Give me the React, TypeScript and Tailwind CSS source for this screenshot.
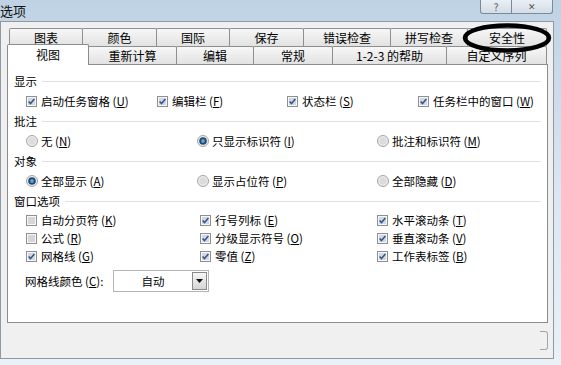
import React from "react";

type OptProps = {
  kind: "check" | "radio";
  on: boolean;
  label: string;
  k: string;
  w: string;
};

const CheckBox = ({ on }: { on: boolean }) => (
  <svg width="11" height="11" viewBox="0 0 11 11" className="shrink-0">
    <rect x="0.5" y="0.5" width="10" height="10" fill="#f7f7f7" stroke="#8e8f8f" />
    <rect x="2" y="2" width="7" height="7" fill={on ? "#cfd9e6" : "#d6d6d6"} />
    {on && (
      <path d="M2.6 5.4 L4.5 7.6 L8.4 2.9" stroke="#3a5287" strokeWidth="1.5" fill="none" />
    )}
  </svg>
);

const RadioDot = ({ on }: { on: boolean }) => (
  <svg width="12" height="12" viewBox="0 0 12 12" className="shrink-0">
    <circle cx="6" cy="6" r="5.5" fill="#eeeeee" stroke="#a2a2a2" />
    <circle cx="6" cy="6" r="3.8" fill={on ? "#1e4a74" : "#dcdcdc"} />
    {on && <circle cx="6" cy="6" r="1.9" fill="#62a0d8" />}
  </svg>
);

const Opt = ({ kind, on, label, k, w }: OptProps) => (
  <div className={`${w} flex items-center`}>
    {kind === "check" ? <CheckBox on={on} /> : <RadioDot on={on} />}
    <span className={kind === "check" ? "ml-[4px] whitespace-nowrap" : "ml-[3px] whitespace-nowrap"}>
      {label} (<u>{k}</u>)
    </span>
  </div>
);

const Section = ({ title }: { title: string }) => (
  <div className="flex h-[20px] items-center px-[6px]">
    <span className="whitespace-nowrap">{title}</span>
    <div className="ml-[5px] h-px flex-1 bg-[#dde2e7]" />
  </div>
);

const Tab = ({ label, w }: { label: string; w: string }) => (
  <div
    className={`${w} -mr-px flex h-[18px] items-center justify-center rounded-t-[2px] border border-b-0 border-[#8f8f8f] bg-linear-to-b from-[#f7f7f7] to-[#e2e2e2] text-[12px] leading-none whitespace-nowrap`}
  >
    {label}
  </div>
);

const App = () => {
  return (
    <div className="relative h-[365px] w-[561px] overflow-hidden bg-linear-to-b from-[#bfd2e4] via-[#d9e6f1] to-[#eaf1f7] font-['Noto_Sans_CJK_SC',sans-serif] text-black">
      {/* title bar */}
      <div className="flex h-[21px] items-start">
        <div className="pt-[2px] text-[13px] leading-[17px] text-[#111]">选项</div>
        <div className="ml-auto mr-[8px] flex h-[14px]">
          <div className="flex h-[14px] w-[32px] items-center justify-center rounded-bl-[3px] border border-t-0 border-[#7d8996] bg-linear-to-b from-[#e9eff5] to-[#d3dde7] text-[10px] leading-[12px] text-[#555]">
            ?
          </div>
          <div className="flex h-[14px] w-[41px] items-center justify-center rounded-br-[3px] border border-t-0 border-l-0 border-[#7d8996] bg-linear-to-b from-[#e9eff5] to-[#d3dde7] text-[9px] leading-[12px] text-[#555]">
            ✕
          </div>
        </div>
      </div>

      {/* dialog body */}
      <div className="h-[338px] w-[554px] border border-[#8e99a4] bg-[#f0f0f0]">
        <div className="mt-[6px]">
          <div className="flex pl-[8px]">
            <Tab label="图表" w="w-[74px]" />
            <Tab label="颜色" w="w-[75px]" />
            <Tab label="国际" w="w-[74px]" />
            <Tab label="保存" w="w-[75px]" />
            <Tab label="错误检查" w="w-[88px]" />
            <Tab label="拼写检查" w="w-[78px]" />
            <Tab label="安全性" w="w-[80px]" />
          </div>
          <div className="flex h-[18px] items-end pl-[6px]">
            <div className="relative z-10 -mb-px -mr-px flex h-[21px] w-[82px] items-center justify-center rounded-t-[2px] border border-b-0 border-[#8c8c8c] bg-white text-[12px] leading-none">
              视图
            </div>
            <Tab label="重新计算" w="w-[89px]" />
            <Tab label="编辑" w="w-[78px]" />
            <Tab label="常规" w="w-[80px]" />
            <Tab label="1-2-3 的帮助" w="w-[115px]" />
            <Tab label="自定义序列" w="w-[101px]" />
          </div>
        </div>

        {/* panel */}
        <div className="ml-[6px] h-[259px] w-[541px] border border-[#8c8c8c] bg-white pt-[6px] text-[11.5px] leading-[14px]">
          <Section title="显示" />
          <div className="flex h-[20px] items-center pl-[18px]">
            <Opt kind="check" on label="启动任务窗格" k="U" w="w-[131px]" />
            <Opt kind="check" on label="编辑栏" k="F" w="w-[130px]" />
            <Opt kind="check" on label="状态栏" k="S" w="w-[131px]" />
            <Opt kind="check" on label="任务栏中的窗口" k="W" w="w-[120px]" />
          </div>
          <Section title="批注" />
          <div className="flex h-[20px] items-center pl-[18px]">
            <Opt kind="radio" on={false} label="无" k="N" w="w-[171px]" />
            <Opt kind="radio" on label="只显示标识符" k="I" w="w-[180px]" />
            <Opt kind="radio" on={false} label="批注和标识符" k="M" w="w-[140px]" />
          </div>
          <Section title="对象" />
          <div className="flex h-[20px] items-center pl-[18px]">
            <Opt kind="radio" on label="全部显示" k="A" w="w-[171px]" />
            <Opt kind="radio" on={false} label="显示占位符" k="P" w="w-[180px]" />
            <Opt kind="radio" on={false} label="全部隐藏" k="D" w="w-[140px]" />
          </div>
          <Section title="窗口选项" />
          <div className="flex h-[18px] items-center pl-[18px]">
            <Opt kind="check" on={false} label="自动分页符" k="K" w="w-[174px]" />
            <Opt kind="check" on label="行号列标" k="E" w="w-[177px]" />
            <Opt kind="check" on label="水平滚动条" k="T" w="w-[140px]" />
          </div>
          <div className="flex h-[18px] items-center pl-[18px]">
            <Opt kind="check" on={false} label="公式" k="R" w="w-[174px]" />
            <Opt kind="check" on label="分级显示符号" k="O" w="w-[177px]" />
            <Opt kind="check" on label="垂直滚动条" k="V" w="w-[140px]" />
          </div>
          <div className="flex h-[18px] items-center pl-[18px]">
            <Opt kind="check" on label="网格线" k="G" w="w-[174px]" />
            <Opt kind="check" on label="零值" k="Z" w="w-[177px]" />
            <Opt kind="check" on label="工作表标签" k="B" w="w-[140px]" />
          </div>
          <div className="mt-[5px] flex items-center pl-[17px]">
            <span className="w-[88px] whitespace-nowrap">
              网格线颜色 (<u>C</u>):
            </span>
            <div className="flex h-[22px] w-[96px] items-center border border-[#b3b3b3] bg-white">
              <span className="flex-1 text-center">自动</span>
              <div className="mr-[1px] flex h-[18px] w-[15px] items-center justify-center border border-[#8a8a8a] bg-linear-to-b from-[#f6f6f6] to-[#d6d6d6]">
                <svg width="7" height="4" viewBox="0 0 7 4">
                  <path d="M0 0 H7 L3.5 4 Z" fill="#111" />
                </svg>
              </div>
            </div>
          </div>
        </div>

        {/* bottom button strip */}
        <div className="flex justify-end pr-[5px] pt-[8px]">
          <div className="h-[19px] w-[8px] rounded-r-[3px] border border-l-0 border-[#a5a5a5]" />
        </div>
      </div>

      {/* hand-drawn annotation */}
      <svg
        className="absolute left-[460px] top-[19px]"
        width="100"
        height="38"
        viewBox="0 0 100 38"
      >
        <ellipse cx="47" cy="19" rx="42" ry="12.5" fill="none" stroke="#000" strokeWidth="4.5" />
      </svg>
    </div>
  );
};

export default App;
